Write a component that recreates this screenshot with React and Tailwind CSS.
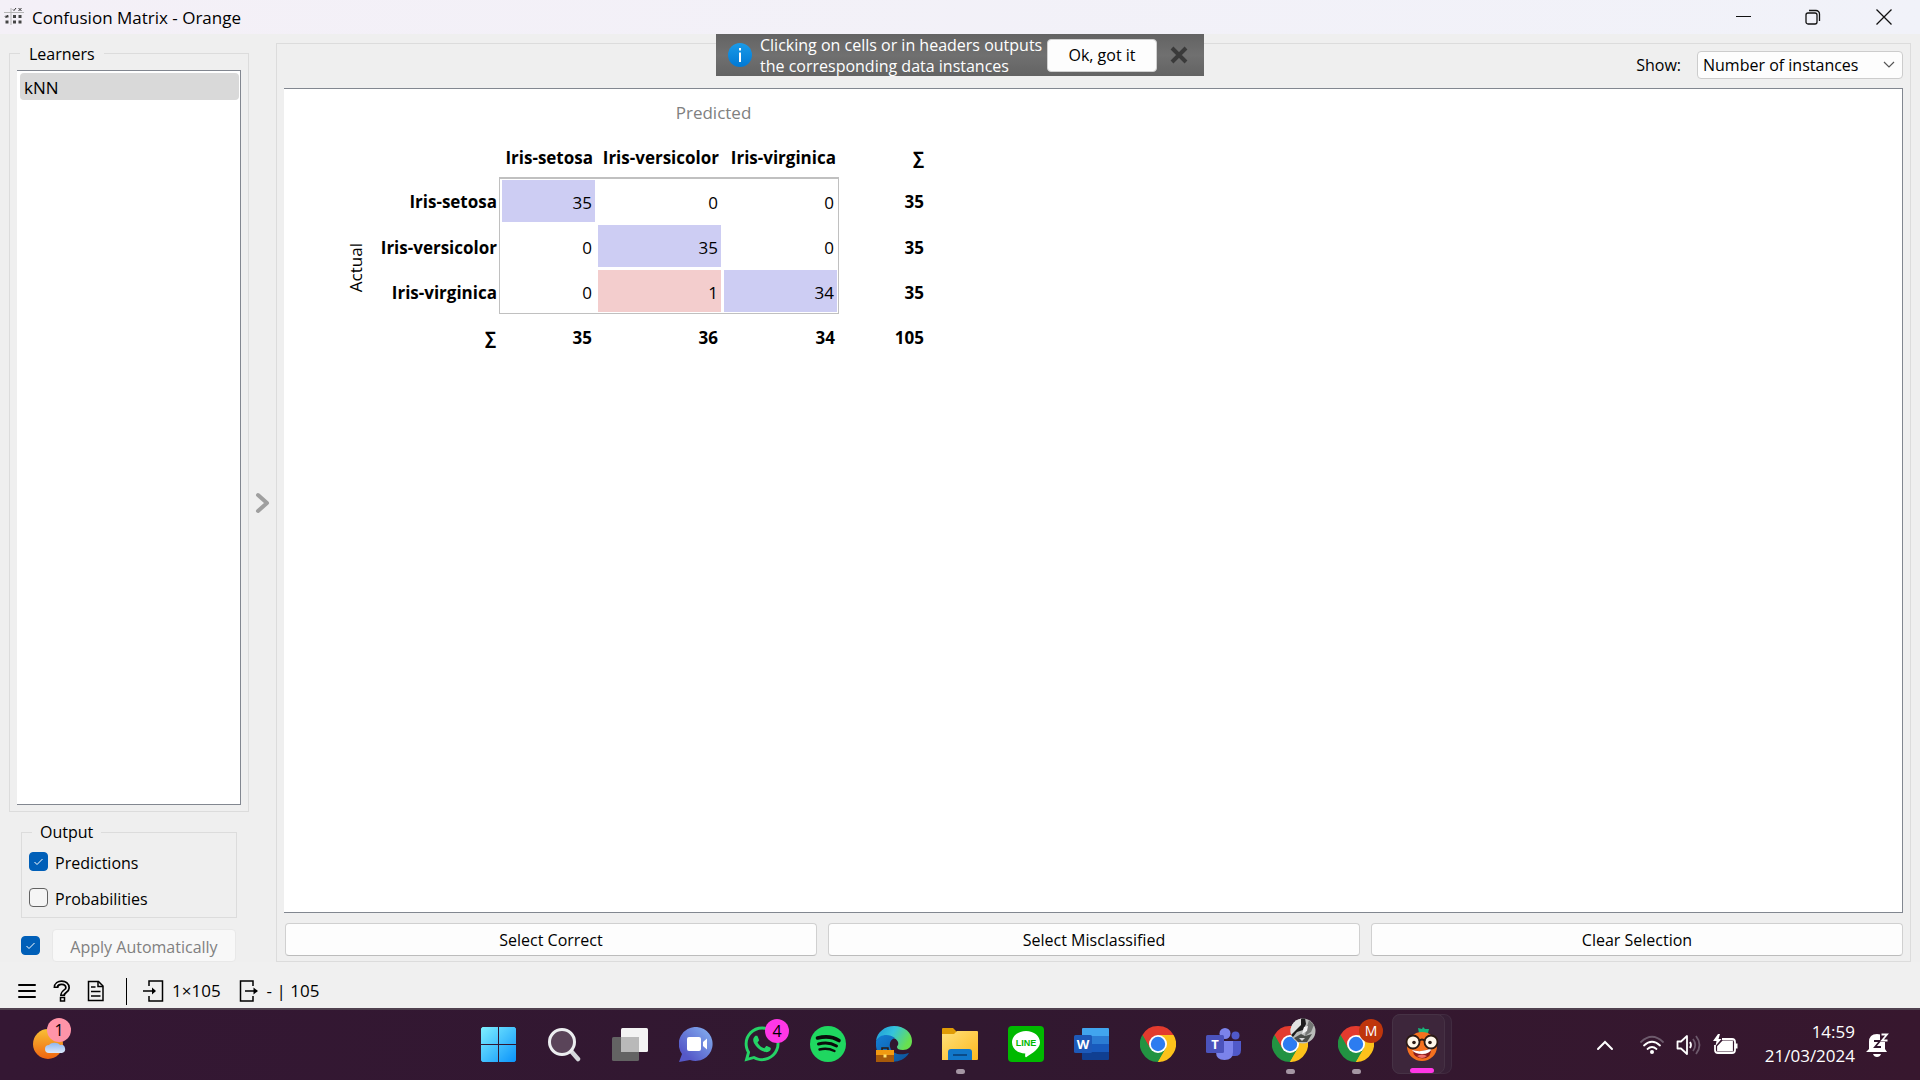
import React, { useState } from 'react';
import { FaWhatsapp } from 'react-icons/fa';

const classes = ['Iris-setosa', 'Iris-versicolor', 'Iris-virginica'];
const counts = [
  [35, 0, 0],
  [0, 35, 0],
  [0, 1, 34],
];
const rowTotals = [35, 35, 35];
const columnTotals = [35, 36, 34];

function Check({ label, defaultChecked, hidden }) {
  return (
    <label className="flex items-center gap-[7px]">
      <span className="relative flex h-[19px] w-[19px]">
        <input
          type="checkbox"
          defaultChecked={defaultChecked}
          aria-label={hidden ? label : undefined}
          className="peer h-[19px] w-[19px] appearance-none rounded border border-[#626262] bg-[#f5f5f5] checked:border-[#005fb8] checked:bg-[#005fb8]"
        />
        <svg viewBox="0 0 19 19" className="pointer-events-none absolute inset-0 hidden peer-checked:block" fill="none" stroke="#fff" strokeWidth="1">
          <path d="M5.5 10l2.5 2.5L13.5 7" />
        </svg>
      </span>
      {!hidden && <span className="pt-[3px]">{label}</span>}
    </label>
  );
}

function TitleBar() {
  return (
    <header className="flex h-[34px] items-center bg-linear-to-r from-[#f4f0f7] to-[#f1f2f9]">
      <svg width="20" height="20" viewBox="0 0 20 20" className="ml-1" stroke="#b5b5b5" fill="#444">
        <path d="M7 1v17M0 5.500h20" strokeWidth="1" />
        <g stroke="none">
          <path d="M9 8h3v3H9zM14.500 8h3v3h-3zM9 13.500h3v3H9zM14.500 13.500h3v3h-3z" />
          <path d="M1.500 8.500h3v2h-3zM1.500 13.500h3v3h-3z" />
        </g>
        <path d="M9 2.500l1 1 2-2.500M14.500 1l3 3M17.500 1l-3 3M1 9.500l1 1 2-2.500" stroke="#333" fill="none" />
      </svg>
      <h1 className="ml-2 flex-1 pt-px text-[17px]">Confusion Matrix - Orange</h1>
      <button aria-label="Minimize" className="flex h-full w-[69px] items-center justify-center">
        <svg width="16" height="16" stroke="#111" strokeWidth="1"><path d="M0 7.500h15" /></svg>
      </button>
      <button aria-label="Restore" className="flex h-full w-[69px] items-center justify-center">
        <svg width="16" height="16" viewBox="0 0 16 16" fill="none" stroke="#111" strokeWidth="1.300">
          <rect x="1" y="4" width="11" height="11" rx="2" />
          <path d="M4 1.500h7a3.500 3.500 0 0 1 3.500 3.500v7" />
        </svg>
      </button>
      <button aria-label="Close" className="flex h-full w-[73px] items-center justify-center">
        <svg width="16" height="16" stroke="#111" strokeWidth="1.300"><path d="M.5.5l15 15M15.500.5l-15 15" /></svg>
      </button>
    </header>
  );
}

function Banner() {
  return (
    <div role="status" className="absolute left-1/2 top-[34px] flex h-[42px] w-[488px] -translate-x-1/2 items-center bg-linear-to-b from-[#636363] via-[#707070] to-[#636363] text-white">
      <svg width="24" height="24" viewBox="0 0 24 24" className="ml-3">
        <defs>
          <linearGradient id="info" x1="0" y1="0" x2="0" y2="1"><stop stopColor="#1a9be8" /><stop offset="1" stopColor="#0078d4" /></linearGradient>
        </defs>
        <circle cx="12" cy="12" r="12" fill="url(#info)" />
        <path d="M12 9.500V19M12 5v2.500" stroke="#fff" strokeWidth="2" />
      </svg>
      <p className="ml-2 w-[287px] whitespace-nowrap pt-px text-base leading-[21px]">
        Clicking on cells or in headers outputs<br />the corresponding data instances
      </p>
      <button className="h-[33px] w-[110px] rounded border border-[#d0d0d0] bg-[#fdfdfd] text-base text-black">Ok, got it</button>
      <button aria-label="Dismiss" className="ml-[13px]">
        <svg width="18" height="18" viewBox="0 0 18 18" stroke="#3a3a3a" strokeWidth="4"><path d="M2 2l14 14M16 2L2 16" /></svg>
      </button>
    </div>
  );
}

function Sidebar() {
  return (
    <aside className="flex w-[240px] flex-col">
      <fieldset className="flex flex-1 flex-col border border-[#dcdcdc] px-[7px] pb-[6px] pt-[5px]">
        <legend className="ml-[3px] h-6 px-[9px] leading-[26px]">Learners</legend>
        <ul className="flex-1 border-b border-r border-t border-[#828790] bg-white py-[2px] pl-[3px] pr-px">
          <li className="h-[27px] rounded-sm bg-[#d9d9d9] pl-1 text-[17px] leading-[29px]">kNN</li>
        </ul>
      </fieldset>
      <fieldset className="mx-3 mt-2 flex flex-col gap-[12px] border border-[#dcdcdc] px-[7px] pb-[8px] pt-[5px]">
        <legend className="ml-[3px] h-6 px-2 leading-6">Output</legend>
        <div className="flex h-6 items-center"><Check label="Predictions" defaultChecked /></div>
        <div className="flex h-6 items-center"><Check label="Probabilities" /></div>
      </fieldset>
      <div className="ml-3 mr-[13px] mt-[11px] flex h-[33px] items-center gap-3">
        <Check label="Apply automatically" defaultChecked hidden />
        <button disabled className="h-full flex-1 rounded border border-[#e8e8e8] bg-[#f8f8f8] pt-[2px] text-[#808080]">Apply Automatically</button>
      </div>
    </aside>
  );
}

const cellEdges = ['border-l pl-[2px] pr-px', 'pl-[2px] pr-px', 'border-r pl-[2px] pr-px'];
const rowEdges = ['border-t-2', 'pt-px', 'pt-[2px] border-b'];

function Matrix() {
  return (
    <table className="ml-[56px] mt-px w-[588px] table-fixed border-separate border-spacing-0 text-right text-[17px]">
      <colgroup>
        <col className="w-[32px]" />
        <col className="w-[127px]" />
        <col className="w-[97px]" />
        <col className="w-[126px]" />
        <col className="w-[117px]" />
        <col className="w-[89px]" />
      </colgroup>
      <thead>
        <tr className="h-[46px]">
          <td colSpan={2} />
          <th colSpan={4} className="text-center font-normal text-[#808080]">Predicted</th>
        </tr>
        <tr className="h-[41px]">
          <td colSpan={2} />
          {classes.map((name) => (
            <th key={name} scope="col" className="whitespace-nowrap pr-[3px] pt-[2px] font-bold">{name}</th>
          ))}
          <th scope="col" className="pr-1 pt-[2px]">∑</th>
        </tr>
      </thead>
      <tbody>
        {counts.map((row, r) => (
          <tr key={classes[r]} className="h-[45px]">
            {r === 0 && (
              <th rowSpan={4} scope="rowgroup" className="p-0 pr-px pt-1 font-normal">
                <span className="inline-block rotate-180 [writing-mode:vertical-rl]">
                  <span className="block w-[32px] text-center leading-[32px]">Actual</span>
                </span>
              </th>
            )}
            <th scope="row" className="whitespace-nowrap pr-[2px] pt-[4px] font-bold">{classes[r]}</th>
            {row.map((n, c) => (
              <td key={c} className={`border-[#c0c0c0] py-px ${cellEdges[c]} ${rowEdges[r]}`}>
                <div className={`h-[42px] pr-[3px] leading-[45px] ${n === 0 ? '' : r === c ? 'bg-[#cdcdf3]' : 'bg-[#f3cdcd]'}`}>{n}</div>
              </td>
            ))}
            <th className="pr-1 pt-[4px] font-bold">{rowTotals[r]}</th>
          </tr>
        ))}
        <tr className="h-[46px]">
          <th scope="row" className="pr-[3px] pt-[2px]">∑</th>
          {columnTotals.map((n, c) => <th key={c} className="pr-1 pt-[2px]">{n}</th>)}
          <th className="pr-1 pt-[2px]">105</th>
        </tr>
      </tbody>
    </table>
  );
}

function StatusBar() {
  return (
    <footer className="flex h-[46px] items-center bg-[#f0f0f0] pl-[17px] pt-3 text-[17px]">
      <button aria-label="Menu"><svg width="20" height="20" viewBox="0 0 20 20" stroke="#000" strokeWidth="2" strokeLinecap="round"><path d="M2 4h16M2 10h16M2 16h16" /></svg></button>
      <button aria-label="Help" className="ml-[16px]">
        <svg width="18" height="22" viewBox="0 0 18 22" fill="none" stroke="#000">
          <path d="M3 8c0-7 11.500-7 11.500 0 0 3-5 3.500-5 8" strokeWidth="5" />
          <path d="M3 6.500c0-5 11.500-5.500 11.500 1.500 0 3-5 3.500-5 6.500" strokeWidth="1.600" stroke="#f0f0f0" />
          <rect x="7.500" y="17.500" width="4" height="3.500" strokeWidth="1.500" fill="#f0f0f0" />
        </svg>
      </button>
      <button aria-label="Report" className="ml-[16px]">
        <svg width="18" height="22" viewBox="0 0 18 22" fill="none" stroke="#000" strokeWidth="1.500">
          <path d="M1.500 1.500h10l4.500 4.500v14.500h-14.500z" /><path d="M11 1.500V6.500h5" /><path d="M4 7h4.500M4 11.500h9.500M4 16h9.500" />
        </svg>
      </button>
      <span className="ml-[21px] h-[27px] w-px bg-black" />
      <button className="ml-4 flex items-center gap-2">
        <svg width="21" height="22" viewBox="0 0 21 22" fill="none" stroke="#000" strokeWidth="1.500">
          <path d="M6 6V1h13.500v20H6v-5M0 11h12" /><path d="M9 7.500l4 3.500-4 3.500z" fill="#000" stroke="none" />
        </svg>
        1×105
      </button>
      <button className="ml-[18px] flex items-center gap-2">
        <svg width="20" height="22" viewBox="0 0 20 22" fill="none" stroke="#000" strokeWidth="1.500">
          <path d="M14 6V1H1.500v20H14v-5M6 11h12" /><path d="M14.500 7.500l4.500 3.500-4.500 3.500z" fill="#000" stroke="none" />
        </svg>
        - | 105
      </button>
    </footer>
  );
}

function Chrome() {
  return (
    <svg width="36" height="36" viewBox="0 0 36 36">
      <path d="M18 18L2.410 9A18 18 0 0 1 33.590 9z" fill="#e33b2e" />
      <path d="M18 18L33.590 9A18 18 0 0 1 18 36z" fill="#fcc21b" />
      <path d="M18 18L18 36A18 18 0 0 1 2.410 9z" fill="#229342" />
      <path d="M18 9h15.590L25.800 22.500z" fill="#fcc21b" />
      <path d="M25.800 22.500L18 36l-5-7 5-8z" fill="#229342" />
      <path d="M25.800 22.500L18 36h2l8-14z" fill="#fcc21b" />
      <path d="M10.200 22.500L2.410 9l15.590 0z" fill="#e33b2e" />
      <path d="M10.200 22.500L2.410 9a18 18 0 0 0-1.500 14z" fill="#229342" />
      <circle cx="18" cy="18" r="9" fill="#fff" />
      <circle cx="18" cy="18" r="7.200" fill="#2c7cf0" />
    </svg>
  );
}

const apps = [
  {
    name: 'Start',
    icon: (
      <svg width="35" height="35" viewBox="0 0 35 35">
        <defs><linearGradient id="win" x1="0" y1="0" x2="35" y2="35" gradientUnits="userSpaceOnUse"><stop stopColor="#7ff0ff" /><stop offset="1" stopColor="#0a93fb" /></linearGradient></defs>
        <path d="M1.500 0H17v17H0V1.500zM18 0h15.500L35 1.500V17H18zM0 18h17v17H1.500L0 33.500zM18 18h17v15.500L33.500 35H18z" fill="url(#win)" />
      </svg>
    ),
  },
  {
    name: 'Search',
    icon: (
      <svg width="34" height="35" viewBox="0 0 34 35" fill="none">
        <path d="M24 24l7 8" stroke="#d5d8dc" strokeWidth="4.500" strokeLinecap="round" />
        <circle cx="15" cy="15" r="12.500" fill="#5a4459" stroke="#eceef0" strokeWidth="3" />
      </svg>
    ),
  },
  {
    name: 'Task view',
    icon: (
      <svg width="36" height="35" viewBox="0 0 36 35">
        <rect y="10" width="27" height="24" rx="1.500" fill="#636363" />
        <rect x="9" y="1" width="27" height="24" rx="1.500" fill="#f3f3f3" />
        <path d="M9 10h18v15H9z" fill="#b9b9b9" />
      </svg>
    ),
  },
  {
    name: 'Chat',
    icon: (
      <svg width="35" height="35" viewBox="0 0 35 35">
        <defs><linearGradient id="chat" x1="0" y1="1" x2="1" y2="0"><stop offset=".2" stopColor="#5558c8" /><stop offset="1" stopColor="#86b4f2" /></linearGradient></defs>
        <path d="M18 0a17 17 0 1 1-7 33L0 35l3-8A17 17 0 0 1 18 0z" fill="url(#chat)" />
        <rect x="8" y="10" width="14" height="14" rx="2" fill="#fff" />
        <path d="M24 15l4-3.500v11L24 19z" fill="#fff" />
      </svg>
    ),
  },
  {
    name: 'WhatsApp',
    icon: <FaWhatsapp className="h-[40px] w-[40px] text-[#25d366]" />,
    badge: <span className="absolute -top-[5px] right-[6px] flex h-6 w-6 items-center justify-center rounded-full bg-[#ff37e6] text-base text-black">4</span>,
  },
  {
    name: 'Spotify',
    icon: (
      <svg width="36" height="36" viewBox="0 0 36 36" fill="none" stroke="#0b0b0b" strokeLinecap="round">
        <circle cx="18" cy="18" r="18" fill="#1fd760" stroke="none" />
        <path d="M7.500 12c8-2 16-1 21.500 2.500" strokeWidth="3.600" />
        <path d="M8.500 18c6.500-1.800 13-1 18 2" strokeWidth="3" />
        <path d="M9.500 23.500c5.500-1.500 10.500-.8 15 1.500" strokeWidth="2.400" />
      </svg>
    ),
  },
  {
    name: 'Edge',
    icon: (
      <svg width="36" height="36" viewBox="0 0 36 36">
        <defs>
          <linearGradient id="edge" x1="0" y1="0" x2="1" y2=".4"><stop stopColor="#1c97d8" /><stop offset=".5" stopColor="#35c3dc" /><stop offset="1" stopColor="#68e04f" /></linearGradient>
          <linearGradient id="edge2" x1="0" y1="0" x2="1" y2="1"><stop stopColor="#1480d6" /><stop offset="1" stopColor="#0c5299" /></linearGradient>
        </defs>
        <path d="M0 15C1 6 9 0 18 0c11 0 18 7 18 15 0 6-4 9-9 9-4 0-6-1-6-3 0-1 2-2 1-5-1-3-5-5-10-5C6 11 1 13 0 15z" fill="url(#edge)" />
        <path d="M0 15c3-7 13-8 19-3-4 1-6 5-5 9 2 7 10 9 19 6-5 8-14 10-21 8C3 33-1 24 0 15z" fill="url(#edge2)" />
        <path d="M6 24v-2h6v2" stroke="#2a1a10" strokeWidth="1.500" fill="none" />
        <path d="M0 24h18v12H0z" fill="#a75a0a" /><path d="M0 24h18v5H0z" fill="#f19a12" /><path d="M7.500 28.500h3v3h-3z" fill="#ffe06b" />
      </svg>
    ),
  },
  {
    name: 'File Explorer',
    running: true,
    icon: (
      <svg width="36" height="34" viewBox="0 0 36 34">
        <defs><linearGradient id="fold" x1="0" y1="0" x2="1" y2="1"><stop stopColor="#ffe07a" /><stop offset="1" stopColor="#fcb91f" /></linearGradient></defs>
        <path d="M0 12V2Q0 1 1 1h10l4 4-3 6z" fill="#e09b05" />
        <path d="M0 7h12l3-3h20q1 0 1 1v27q0 1-1 1H0z" fill="url(#fold)" />
        <path d="M6 33v-8q0-3 3-3h18q3 0 3 3v8z" fill="#1177c9" /><path d="M11 28h14" stroke="#0a4b88" strokeWidth="2" />
      </svg>
    ),
  },
  {
    name: 'LINE',
    icon: (
      <svg width="36" height="36" viewBox="0 0 36 36">
        <rect width="36" height="36" rx="4" fill="#00b900" />
        <path d="M18 5c8 0 14 5 14 11.500 0 6-8 11-13.500 14.500-1.500.8-1.500-1-1.200-3.500C9 27 4 22.500 4 16.500 4 10 10 5 18 5z" fill="#fff" />
        <text x="18" y="19.500" textAnchor="middle" fontFamily="Liberation Sans, sans-serif" fontSize="9" fontWeight="700" fill="#00b900">LINE</text>
      </svg>
    ),
  },
  {
    name: 'Word',
    icon: (
      <svg width="36" height="32" viewBox="0 0 36 32">
        <path d="M8 1q0-1 1-1h25q1 0 1 1v7H8z" fill="#41a5ee" /><path d="M8 8h27v8H8z" fill="#2b7cd3" /><path d="M8 16h27v8H8z" fill="#185abd" /><path d="M8 24h27v7q0 1-1 1H9q-1 0-1-1z" fill="#103f91" />
        <rect y="7" width="18" height="18" rx="1.500" fill="#1d59b8" />
        <text x="9" y="20.500" textAnchor="middle" fontFamily="Open Sans, sans-serif" fontSize="13" fontWeight="700" fill="#fff">W</text>
      </svg>
    ),
  },
  { name: 'Chrome', icon: <Chrome /> },
  {
    name: 'Teams',
    icon: (
      <svg width="36" height="33" viewBox="0 0 36 33">
        <circle cx="29.500" cy="7.500" r="4" fill="#5059c9" /><path d="M24 13h11v9q0 6-6 6h-5z" fill="#5059c9" />
        <circle cx="19" cy="5.500" r="5.500" fill="#7b83eb" /><path d="M10 13h17v11q0 8-8.500 8T10 24z" fill="#7b83eb" />
        <rect y="7" width="18" height="18" rx="1.500" fill="#4b53bc" />
        <text x="9" y="20.500" textAnchor="middle" fontFamily="Open Sans, sans-serif" fontSize="13" fontWeight="700" fill="#fff">T</text>
      </svg>
    ),
  },
  {
    name: 'Chrome profile 1',
    running: true,
    icon: <Chrome />,
    badge: (
      <svg width="26" height="26" viewBox="0 0 26 26" className="absolute -top-[8px] right-[7px]">
        <defs><clipPath id="avatar"><circle cx="13" cy="13" r="12.500" /></clipPath></defs>
        <g clipPath="url(#avatar)">
          <path d="M0 0h26v26H0z" fill="#b9bbb9" />
          <path d="M0 0h12l-1 8-6 8-5 2z" fill="#e2e2e2" />
          <path d="M11 0h4l1 6-3 6-6 2-4 5-2-2 6-6 4-4z" fill="#1c1c1c" />
          <path d="M19 2l5 5-3 7-6 4 1-6z" fill="#747674" />
          <path d="M14 9l4-1-1 5-5 3z" fill="#f2f2f2" />
          <path d="M4 20l7-4 4 2 7-2-5 8H8z" fill="#4b4e4a" />
          <path d="M9 20l6 0-3 3z" fill="#d8d8d8" />
        </g>
      </svg>
    ),
  },
  {
    name: 'Chrome profile 2',
    running: true,
    icon: <Chrome />,
    badge: <span className="absolute -top-[7px] right-[6px] flex h-6 w-6 items-center justify-center rounded-full bg-[#bf360c] text-sm text-white">M</span>,
  },
  {
    name: 'Orange',
    active: true,
    icon: (
      <svg width="34" height="36" viewBox="0 0 34 36">
        <path d="M13 2l4 1 1-2 2 2 4 0-1 4h-9z" fill="#17b67a" />
        <ellipse cx="17" cy="20.500" rx="15" ry="14.500" fill="#f5711f" />
        <path d="M8 24q9 3 18-2 1 10-8.500 10.500Q8 32 8 24z" fill="#8c1c1c" /><path d="M7 24q10 3 20-2-2 6-10 6-7 0-10-4z" fill="#fff" />
        <path d="M12 30q5-3 10 0-5 4-10 0z" fill="#f0716c" />
        <circle cx="8" cy="16" r="6.500" fill="#fff7ea" stroke="#2b1a14" strokeWidth="1.800" /><circle cx="26" cy="16" r="6.500" fill="#fff7ea" stroke="#2b1a14" strokeWidth="1.800" />
        <path d="M14 15q3-3 6 0" stroke="#2b1a14" strokeWidth="2" fill="none" />
        <circle cx="9" cy="16.500" r="1.800" fill="#2b1a14" /><circle cx="25" cy="16.500" r="1.800" fill="#2b1a14" />
      </svg>
    ),
  },
];

function Taskbar() {
  return (
    <nav aria-label="Taskbar" className="flex h-[72px] items-center border-t-2 border-[#50414f] bg-linear-to-r from-[#341733] via-[#311830] to-[#37172e] text-white">
      <div className="flex w-0 flex-1 pl-[30px]">
        <button aria-label="Weather" className="relative ml-[2px]">
          <svg width="36" height="36" viewBox="0 0 36 36">
            <defs>
              <linearGradient id="sun" x1="0" y1="0" x2="0" y2="1"><stop stopColor="#f8c036" /><stop offset="1" stopColor="#ef6410" /></linearGradient>
              <linearGradient id="cloud" x1="0" y1="0" x2="0" y2="1"><stop stopColor="#8fb6ef" /><stop offset="1" stopColor="#dbe8fb" /></linearGradient>
            </defs>
            <circle cx="16" cy="17" r="15" fill="url(#sun)" />
            <path d="M17 26a4 4 0 0 1 0-8 6.500 5 0 0 1 11 0 4 4 0 0 1 2 8z" fill="url(#cloud)" />
          </svg>
          <span className="absolute -right-[3px] -top-[9px] flex h-6 w-6 items-center justify-center rounded-full bg-[#ff94a8] text-base text-black">1</span>
        </button>
      </div>
      <ul className="flex pb-[2px]">
        {apps.map((app) => (
          <li key={app.name} className="flex h-[60px] w-[66px] justify-center">
            <button
              aria-label={app.name}
              className={`relative flex h-full items-center justify-center ${app.active ? 'w-[60px] rounded-lg border border-l-0 border-[#412b40] bg-[#372036]' : 'w-full'}`}
            >
              {app.active && <span className="absolute inset-y-[-1px] left-0 w-[53px] rounded-lg border border-[#463245] bg-[#3d263b]" />}
              <span className="relative flex w-full justify-center">{app.icon}{app.badge}</span>
              {app.running && <span className="absolute bottom-0 h-[5px] w-[9px] rounded-full bg-[#a596a4]" />}
              {app.active && <span className="absolute bottom-0 h-[5px] w-6 rounded-full bg-[#ff37e6]" />}
            </button>
          </li>
        ))}
      </ul>
      <div className="flex w-0 flex-1 items-center justify-end pr-[30px]">
        <button aria-label="Hidden icons"><svg width="18" height="12" viewBox="0 0 18 12" fill="none" stroke="#fff" strokeWidth="2" strokeLinecap="round"><path d="M2 10l7-7 7 7" /></svg></button>
        <button aria-label="Network, volume and battery" className="ml-[26px] flex items-center gap-3">
          <svg width="24" height="20" viewBox="0 0 24 20" fill="none" strokeWidth="1.800" strokeLinecap="round">
            <path d="M1 7Q12-3.500 23 7" stroke="#6d5a6c" /><path d="M4 10.500q8-7.500 16 0M7.500 14q4.500-4 9 0" stroke="#fff" /><circle cx="12" cy="17" r="2" fill="#fff" />
          </svg>
          <svg width="25" height="22" viewBox="0 0 25 22" fill="none" stroke="#fff" strokeWidth="1.800" strokeLinejoin="round">
            <path d="M1.500 7.500H5L11 2v18l-6-5.500H1.500z" /><path d="M14 8q2 3 0 6" /><path d="M17 5q4.500 6 0 12M20 2q7 9 0 18" stroke="#6d5a6c" />
          </svg>
          <svg width="25" height="22" viewBox="0 0 25 22" fill="none" stroke="#fff" strokeWidth="1.800">
            <path d="M9 5h10q3 0 3 3v8q0 3-3 3H5q-3 0-3-3v-5" /><path d="M10 7.500h9v9H5v-4z" fill="#fff" /><path d="M23 9.500v5" strokeWidth="3" /><path d="M5 0L0 7h3.500L2.500 12 8.500 5H5.500L7 0z" fill="#fff" stroke="none" />
          </svg>
        </button>
        <button className="ml-[13px] w-[104px] pb-[3px] text-right text-[17px] leading-6">14:59<br />21/03/2024</button>
        <button aria-label="Notifications" className="ml-[11px]">
          <svg width="24" height="26" viewBox="0 0 24 26" fill="#fff">
            <path d="M3 17V10Q3 2 11 2t8 8v7l2 3H0z" /><path d="M7 22h8q-1 3-4 3t-4-3z" />
            <path d="M8 9h6l-5 6h6" fill="none" stroke="#31172f" strokeWidth="1.800" /><path d="M14 1h9v9h-9z" fill="#37172e" /><path d="M15.500 2.500h5.500l-5 6h5.500" fill="none" stroke="#fff" strokeWidth="1.800" />
          </svg>
        </button>
      </div>
    </nav>
  );
}

export default function App() {
  const [show, setShow] = useState('Number of instances');
  return (
    <div className="relative flex min-h-screen flex-col bg-[#efefef] font-['Open_Sans','Noto_Sans',sans-serif] text-base text-black">
      <TitleBar />
      <div className="flex flex-1 pl-[9px] pr-[9px] pt-[7px]">
        <Sidebar />
        <button aria-label="Collapse panel" className="flex w-[27px] items-center justify-center pt-[2px]">
          <svg width="16" height="22" viewBox="0 0 16 22" fill="none" stroke="#9f9f9f" strokeWidth="4" strokeLinecap="round" strokeLinejoin="round"><path d="M3 3l9 8-9 8" /></svg>
        </button>
        <main className="mt-[2px] flex flex-1 flex-col border border-[#dcdcdc] px-[7px] pb-[5px]">
          <div className="flex h-[44px] items-center justify-end pb-[2px]">
            <label htmlFor="show" className="mr-4">Show:</label>
            <div className="relative flex">
              <select id="show" value={show} onChange={(e) => setShow(e.target.value)} className="h-[28px] w-[206px] appearance-none rounded-sm border border-[#cccccc] bg-[#fdfdfd] pl-[5px] leading-none">
                <option>Number of instances</option>
                <option>Proportion of predicted</option>
                <option>Proportion of actual</option>
              </select>
              <svg width="12" height="8" viewBox="0 0 12 8" className="pointer-events-none absolute right-2 top-[10px]" fill="none" stroke="#555" strokeWidth="1.200"><path d="M1 1l5 5 5-5" /></svg>
            </div>
          </div>
          <div className="flex-1 border-b border-r border-t border-[#828790] bg-white">
            <Matrix />
          </div>
          <div className="ml-px mt-[10px] grid grid-cols-3 gap-[11px]">
            {['Select Correct', 'Select Misclassified', 'Clear Selection'].map((text) => (
              <button key={text} className="h-[33px] rounded border border-[#d0d0d0] border-b-[#bcbcbc] bg-[#fdfdfd]">{text}</button>
            ))}
          </div>
        </main>
      </div>
      <StatusBar />
      <Taskbar />
      <Banner />
    </div>
  );
}
